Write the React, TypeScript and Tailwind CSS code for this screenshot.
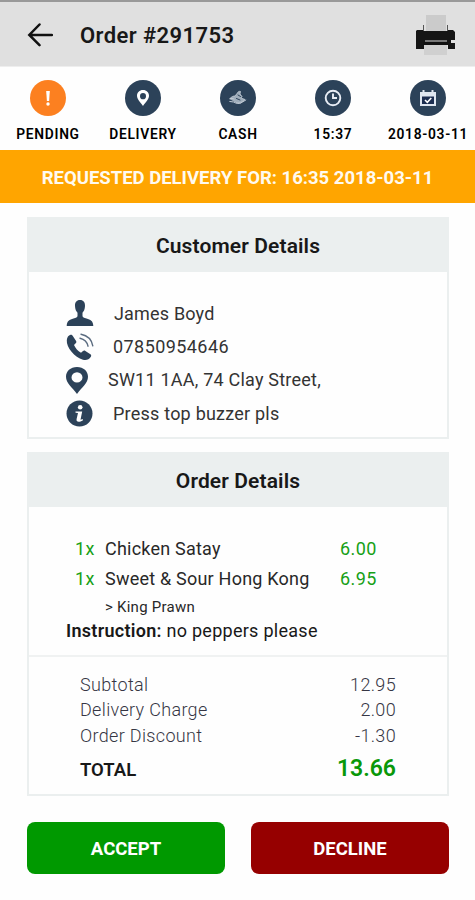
import React from "react";

const PinShape = () => (
  <path
    fillRule="evenodd"
    d="M12 1C6 1 2 5.2 2 10.4 2 16.500 7.500 20.500 12 27c4.500-6.500 10-10.500 10-16.600C22 5.200 18 1 12 1Zm0 5a5 5 0 1 1 0 10 5 5 0 0 1 0-10Z"
  />
);

const BackIcon = () => (
  <svg width="26" height="26" viewBox="0 -1 26 26" fill="none" stroke="#111" strokeWidth="2.500" strokeLinecap="round">
    <path d="M25 13H2.500M12.500 2.500 2.300 13l10.200 10.200" />
  </svg>
);

const PrinterIcon = () => (
  <svg width="40" height="42" viewBox="0 0 40 42">
    <path fill="#cbcbcb" d="M11 2h20v17H11z" />
    <path fill="#555" d="M8 12h1v6H8zM32 12h1v6h-1z" />
    <path fill="#151515" d="M2 17h6v1h25v-1h5l2 2v8h-4v3h4v6h-7v-4H9v4H1V18z" />
    <path fill="#777" d="M10 27h22v2H10z" />
    <path fill="#111" d="M8 29h25v3H8z" />
    <path fill="#d0d0d0" d="M9 32h23v10H9z" />
  </svg>
);

const PendingIcon = () => (
  <svg width="36" height="36" viewBox="0 0 36 36" fill="white">
    <path d="M16.200 11h3.600l-.7 10h-2.200z" />
    <circle cx="18" cy="24" r="1.700" />
  </svg>
);

const DeliveryIcon = () => (
  <svg width="12" height="16" viewBox="2 1 20 26" fill="white" preserveAspectRatio="none">
    <PinShape />
  </svg>
);

const CashIcon = () => (
  <svg width="18" height="18" viewBox="0 0 18 18" fill="none" stroke="#c3ccd6" strokeLinecap="round">
    <path fill="#9eacba" strokeWidth=".8" d="M1 9.500C3 7.500 4 7 6 7l2-2.500c1-2 2.500-2.500 3.500-2l-.5 2.500 2 2.500-1 1.500 4 1.500-4.500 3.500H8L5 12z" />
    <path d="M1 9.500c1.500-.5 3 0 4 .5M.8 12.500l4 .5c2 1.500 5 1.800 7 1l5-3" />
    <path d="M7.500 9.500 11 11M9 6l2.500 1.500" stroke="#2c4259" />
  </svg>
);

const ClockIcon = () => (
  <svg width="18" height="18" viewBox="0 0 18 18" fill="none" stroke="#e8edf5" strokeWidth="1.900">
    <circle cx="9" cy="9" r="7.300" />
    <path d="M9 4.500V9h4" />
  </svg>
);

const CalendarIcon = () => (
  <svg width="18" height="18" viewBox="0 0 18 18">
    <path fill="#dfe6f0" d="M1 3h2.500V1h2v2h7V1h2v2H17v14H1z" />
    <path fill="#1b2d50" d="M3 7.500h12V15H3z" />
    <path d="m6 11 2.300 2.300 4-4.300" fill="none" stroke="white" strokeWidth="1.600" />
  </svg>
);

const PersonIcon = () => (
  <svg width="28" height="28" viewBox="0 1 28 28" fill="#2c4259">
    <path d="M14 1c3.500 0 5.200 2.500 5 6-.1 3.500-1.300 5.300-2.500 6.800V17c0 1.300 1.500 1.800 4 2.600 4 1.200 6.500 2 6.800 7.400H.7c.3-5.400 2.800-6.200 6.800-7.400 2.500-.8 4-1.300 4-2.600v-3.200C10.300 12.300 9.100 10.500 9 7c-.2-3.500 1.500-6 5-6Z" />
  </svg>
);

const PhoneIcon = () => (
  <svg width="28" height="28" viewBox="0 0 28 28">
    <path
      fill="#2c4259"
      d="M.8 7C1 4.500 2.500 2.300 4.500 1.800c1-.2 1.800.3 2.300 1.200l3.300 4.900c.5.900.3 1.700-.4 2.400L8 11.900c1.500 3.300 3.800 5.800 7 7.800l2-1.600c.8-.7 1.600-.7 2.400-.1l5 3.300c1 .8 1 1.700.3 2.700-1.500 2.500-4.500 3.600-7.700 2.700C8.700 24.500.2 14.500.8 7Z"
    />
    <path d="M14 5.200c4.500 1 7.200 3.800 8 8M15 1.200c6.500 1.300 10.700 5.400 11.800 11.600" fill="none" stroke="#5b6c80" strokeWidth="1.400" strokeLinecap="round" />
  </svg>
);

const AddressIcon = () => (
  <svg width="22" height="27" viewBox="2 1 20 26" fill="#2c4259" preserveAspectRatio="none">
    <PinShape />
  </svg>
);

const InfoIcon = () => (
  <svg width="27" height="27" viewBox="0 0 27 27">
    <circle cx="13.500" cy="13.500" r="13" fill="#2c4259" />
    <circle cx="14.200" cy="7.300" r="2.300" fill="white" />
    <path fill="white" d="M9.500 11.500h6.700l-1.700 8.300 2.300-.8v1.400c-3.500 2.200-7 1.900-6.200-1.300l1.400-6-2.500-.3z" />
  </svg>
);

const statuses = [
  { label: "PENDING", icon: <PendingIcon />, color: "bg-[#fc8020]" },
  { label: "DELIVERY", icon: <DeliveryIcon />, color: "bg-[#2c4259]" },
  { label: "CASH", icon: <CashIcon />, color: "bg-[#2c4259]" },
  { label: "15:37", icon: <ClockIcon />, color: "bg-[#2c4259]" },
  { label: "2018-03-11", icon: <CalendarIcon />, color: "bg-[#2c4259]" },
];

const customer = [
  { icon: <PersonIcon />, text: "James Boyd", style: "pl-[48px] tracking-[0.18px]" },
  { icon: <PhoneIcon />, text: "07850954646", style: "pl-[47px] tracking-[0.43px]" },
  { icon: <AddressIcon />, text: "SW11 1AA, 74 Clay Street,", style: "pl-[42px] tracking-[0.22px]" },
  { icon: <InfoIcon />, text: "Press top buzzer pls", style: "pl-[47px] tracking-[0.22px]" },
];

const items = [
  { name: "Chicken Satay", price: "6.00" },
  { name: "Sweet & Sour Hong Kong", price: "6.95" },
];

const charges = [
  { label: "Subtotal", value: "12.95" },
  { label: "Delivery Charge", value: "2.00" },
  { label: "Order Discount", value: "-1.30" },
];

const CardTitle = ({ children }: { children: React.ReactNode }) => (
  <h2 className="flex h-[53px] items-center justify-center bg-[#ebefef] pt-0.5 text-[21px] font-semibold tracking-[0.12px]">
    {children}
  </h2>
);

const App: React.FC = () => {
  return (
    <div className="h-[900px] w-[475px] overflow-hidden bg-[#fefefe] font-['Roboto',sans-serif] text-[#181818]">
      <header className="flex h-[67px] items-center border-t-2 border-b border-t-[#999] border-b-[#eee] bg-[#e0e0e0] pr-5 pl-[27px]">
        <BackIcon />
        <h1 className="ml-[27px] flex-1 pt-0.5 text-[22px] font-semibold tracking-[0.42px]">Order #291753</h1>
        <PrinterIcon />
      </header>

      <div className="grid h-[83px] grid-cols-5 pt-[13px]">
        {statuses.map((status) => (
          <div key={status.label} className="flex flex-col items-center">
            <div className={`flex size-[36px] items-center justify-center rounded-full ${status.color}`}>{status.icon}</div>
            <span className="mt-2 pl-px text-[13.800px] leading-5 font-semibold tracking-[0.7px] whitespace-nowrap text-black">
              {status.label}
            </span>
          </div>
        ))}
      </div>

      <div className="flex h-[53px] items-center justify-center bg-[#ffa500] pt-[5px] text-[18.500px] font-bold text-[#fffaf0]">
        REQUESTED DELIVERY FOR: 16:35 2018-03-11
      </div>

      <main className="pt-[14px] pr-[26px] pl-[27px]">
        <section className="h-[222px] border-2 border-[#ebefef]">
          <CardTitle>Customer Details</CardTitle>
          <ul className="pt-[25px] pl-[37px] text-lg text-[#333]">
            {customer.map((row) => (
              <li key={row.text} className="flex h-[33.400px] items-center">
                <span className="w-0 shrink-0">{row.icon}</span>
                <span className={row.style}>{row.text}</span>
              </li>
            ))}
          </ul>
        </section>

        <section className="mt-[13px] h-[344px] border-2 border-[#ebefef]">
          <CardTitle>Order Details</CardTitle>
          <div className="h-[150px] border-b-2 border-[#f0f2f2] pt-[27px] pl-[37px]">
            {items.map((item) => (
              <div key={item.name} className="flex h-[30px] items-center pl-[9px] text-lg text-[#282828]">
                <span className="w-[30px] tracking-[0.4px] text-[#16a016]">1x</span>
                <span className="w-[235px] tracking-[0.22px]">{item.name}</span>
                <span className="tracking-[0.4px] text-[#16a016]">{item.price}</span>
              </div>
            ))}
            <p className="h-[25px] pl-[39px] text-[15px] leading-[26px] tracking-[0.25px] text-[#282828]">&gt; King Prawn</p>
            <p className="text-lg leading-[24px] tracking-[0.28px]">
              <b className="font-semibold">Instruction:</b> no peppers please
            </p>
          </div>
          <dl className="pt-[15px] pr-[51px] pl-[51px]">
            {charges.map((charge) => (
              <div key={charge.label} className="flex h-[25.500px] items-center justify-between text-lg font-light tracking-[0.33px] text-[#363644]">
                <dt>{charge.label}</dt>
                <dd>{charge.value}</dd>
              </div>
            ))}
            <div className="flex h-[42px] items-center justify-between font-semibold">
              <dt className="pt-0.5 text-[18.500px]">TOTAL</dt>
              <dd className="text-[23px] text-[#099809]">13.66</dd>
            </div>
          </dl>
        </section>

        <div className="mt-[26px] flex justify-between text-[18.500px] font-bold text-white">
          <button className="h-[52px] w-[198px] rounded-lg bg-[#009900] pt-[3px]">ACCEPT</button>
          <button className="h-[52px] w-[198px] rounded-lg bg-[#960000] pt-[3px]">DECLINE</button>
        </div>
      </main>
    </div>
  );
};

export default App;
